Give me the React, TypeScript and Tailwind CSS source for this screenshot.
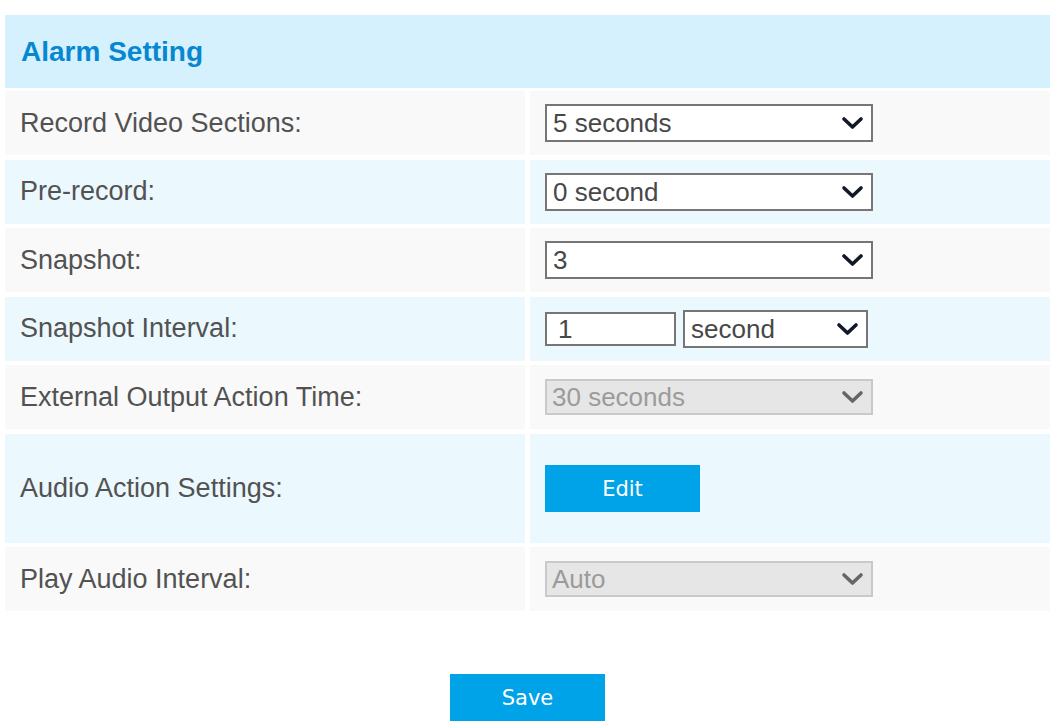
import React from 'react';

const Chevron: React.FC<{ color?: string }> = ({ color = '#111827' }) => (
  <svg width="23" height="14" viewBox="0 0 23 14" fill="none">
    <path d="M3 3 L11.5 11 L20 3" stroke={color} strokeWidth="3.6" strokeLinecap="round" strokeLinejoin="round" />
  </svg>
);

interface FakeSelectProps {
  value: string;
  width: string;
  disabled?: boolean;
}

const FakeSelect: React.FC<FakeSelectProps> = ({ value, width, disabled }) => {
  if (disabled) {
    return (
      <div className={`${width} h-[36px] flex items-center justify-between border-2 border-[#c9c9c9] bg-[#e6e6e6] pl-[5px] pr-[7px] text-[26px] text-[#9b9b9b]`}>
        <span className="leading-none">{value}</span>
        <Chevron color="#666666" />
      </div>
    );
  }
  return (
    <div className={`${width} h-[38px] flex items-center justify-between border-2 border-[#767676] bg-white pl-[6px] pr-[7px] text-[26px] text-[#474747]`}>
      <span className="leading-none">{value}</span>
      <Chevron />
    </div>
  );
};

const Row: React.FC<{ label: string; even?: boolean; tall?: boolean; children: React.ReactNode }> = ({
  label,
  even,
  tall,
  children,
}) => {
  const bg = even ? 'bg-[#ebf8fe]' : 'bg-[#f9f9f9]';
  const h = tall ? 'h-[109px]' : 'h-[64px]';
  return (
    <div className="grid grid-cols-2 gap-x-[5px]">
      <div className={`${bg} ${h} flex items-center pl-[15px] text-[27px] text-[#525252]`}>{label}</div>
      <div className={`${bg} ${h} flex items-center pl-[15px]`}>{children}</div>
    </div>
  );
};

export default function App() {
  return (
    <div
      className="w-[1057px] min-h-[727px] bg-white pt-[15px] pl-[5px]"
      style={{ fontFamily: '"Liberation Sans", Arial, sans-serif' }}
    >
      <div className="w-[1045px]">
        {/* Header */}
        <div className="h-[73px] bg-[#d5f1fd] flex items-center pl-[16px]">
          <h1 className="text-[28px] font-bold text-[#0787d1]">Alarm Setting</h1>
        </div>

        <div className="mt-[3px] flex flex-col gap-[4.5px]">
          <Row label="Record Video Sections:">
            <FakeSelect value="5 seconds" width="w-[328px]" />
          </Row>
          <Row label="Pre-record:" even>
            <FakeSelect value="0 second" width="w-[328px]" />
          </Row>
          <Row label="Snapshot:">
            <FakeSelect value="3" width="w-[328px]" />
          </Row>
          <Row label="Snapshot Interval:" even>
            <div className="flex items-center gap-[7px]">
              <div className="w-[131px] h-[34px] flex items-center border-2 border-[#767676] bg-white pl-[11px] text-[26px] text-[#474747]">
                <span className="leading-none">1</span>
              </div>
              <FakeSelect value="second" width="w-[185px]" />
            </div>
          </Row>
          <Row label="External Output Action Time:">
            <FakeSelect value="30 seconds" width="w-[328px]" disabled />
          </Row>
          <Row label="Audio Action Settings:" even tall>
            <button
              className="w-[155px] h-[47px] bg-[#00a2e8] text-white text-[21px] pt-[4px]"
              style={{ fontFamily: '"DejaVu Sans", Verdana, sans-serif' }}
            >
              Edit
            </button>
          </Row>
          <Row label="Play Audio Interval:">
            <FakeSelect value="Auto" width="w-[328px]" disabled />
          </Row>
        </div>

        <div className="mt-[63px] flex justify-center">
          <button
            className="w-[155px] h-[47px] bg-[#00a2e8] text-white text-[21px] pt-[2px]"
            style={{ fontFamily: '"DejaVu Sans", Verdana, sans-serif' }}
          >
            Save
          </button>
        </div>
      </div>
    </div>
  );
}
